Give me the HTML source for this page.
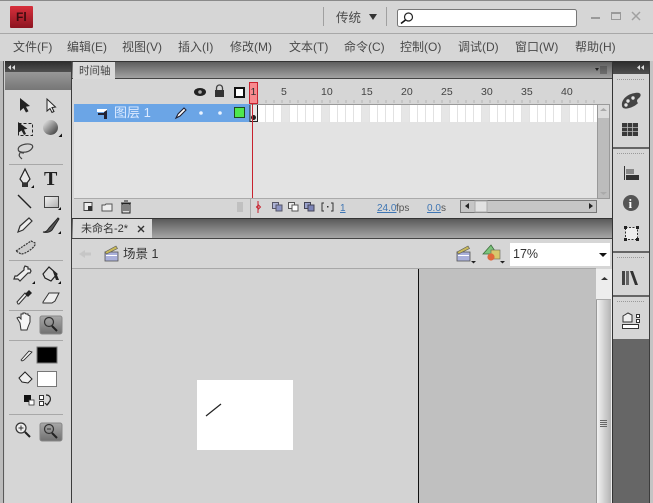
<!DOCTYPE html>
<html><head><meta charset="utf-8"><style>
html,body{margin:0;padding:0;background:#d6d6d6;overflow:hidden}
svg{display:block;position:absolute;left:0;top:0}
text{font-family:"Liberation Sans","Noto Sans CJK SC",sans-serif;fill:#444}
.m{font-size:12px;fill:#4a4a4a}
.n{font-size:10.5px;fill:#444}
</style></head><body>
<svg width="653" height="503" viewBox="0 0 653 503" xmlns="http://www.w3.org/2000/svg">
<defs>
<linearGradient id="hd" x1="0" y1="0" x2="0" y2="1"><stop offset="0" stop-color="#5a5a5a"/><stop offset="1" stop-color="#a6a6a6"/></linearGradient>
<linearGradient id="band" x1="0" y1="0" x2="0" y2="1"><stop offset="0" stop-color="#989898"/><stop offset="1" stop-color="#767676"/></linearGradient>
<linearGradient id="red" x1="0" y1="0" x2="0" y2="1"><stop offset="0" stop-color="#d8303c"/><stop offset="1" stop-color="#8c1420"/></linearGradient>
<linearGradient id="sel" x1="0" y1="0" x2="0" y2="1"><stop offset="0" stop-color="#a8a8a8"/><stop offset="1" stop-color="#707070"/></linearGradient>
<linearGradient id="sb" x1="0" y1="0" x2="1" y2="0"><stop offset="0" stop-color="#f6f6f6"/><stop offset="1" stop-color="#b4b4b4"/></linearGradient>
<linearGradient id="ball" x1="0" y1="0" x2="1" y2="1"><stop offset="0" stop-color="#f0f0f0"/><stop offset="1" stop-color="#2e2e2e"/></linearGradient>
<linearGradient id="dk" x1="0" y1="0" x2="0" y2="1"><stop offset="0" stop-color="#2c2c2c"/><stop offset="1" stop-color="#505050"/></linearGradient>
<linearGradient id="rc" x1="0" y1="0" x2="1" y2="1"><stop offset="0" stop-color="#f4f4f4"/><stop offset="1" stop-color="#b0b0b0"/></linearGradient>
</defs>

<!-- window -->
<rect width="653" height="503" fill="#d6d6d6"/>
<rect x="0" y="0" width="653" height="1" fill="#8a8a8a"/>
<rect x="0" y="33" width="653" height="1" fill="#a8a8a8"/>

<!-- logo -->
<rect x="10" y="6" width="23" height="22" rx="1" fill="url(#red)"/>
<text x="16" y="21" style="font-size:12px;font-weight:bold;fill:#3a0a0e">Fl</text>

<!-- title -->
<rect x="323" y="7" width="1" height="19" fill="#a0a0a0"/>
<text x="336" y="22" class="m" style="font-size:12.5px">传统</text>
<path d="M369 14h8l-4 6z" fill="#333"/>
<rect x="386" y="7" width="1" height="19" fill="#a0a0a0"/>
<rect x="397.500" y="9.500" width="179" height="17" rx="2" fill="#fff" stroke="#777"/>
<circle cx="408.500" cy="17" r="4" fill="none" stroke="#222" stroke-width="1.200"/>
<path d="M405.500 20l-4.500 3.500" stroke="#111" stroke-width="1.600"/>
<rect x="591" y="17" width="9" height="2" fill="#999"/>
<rect x="611.500" y="12.500" width="9" height="7" fill="none" stroke="#999"/><rect x="611" y="12" width="10" height="2" fill="#999"/>
<path d="M632 12l8 8M640 12l-8 8" stroke="#a0a0a0" stroke-width="1.500"/>

<!-- menu -->
<text x="13" y="51" class="m">文件(F)</text>
<text x="67" y="51" class="m">编辑(E)</text>
<text x="122" y="51" class="m">视图(V)</text>
<text x="178" y="51" class="m">插入(I)</text>
<text x="230" y="51" class="m">修改(M)</text>
<text x="289" y="51" class="m">文本(T)</text>
<text x="344" y="51" class="m">命令(C)</text>
<text x="400" y="51" class="m">控制(O)</text>
<text x="458" y="51" class="m">调试(D)</text>
<text x="515" y="51" class="m">窗口(W)</text>
<text x="575" y="51" class="m">帮助(H)</text>

<!-- left dock -->
<rect x="0" y="61" width="3" height="442" fill="#bcbcbc"/>
<rect x="3" y="61" width="1" height="442" fill="#5a5a5a"/>
<rect x="4" y="61" width="1" height="442" fill="#cfcfcf"/>
<rect x="5" y="61" width="67" height="11" fill="url(#dk)"/>
<path d="M11 65l-3 2.500 3 2.500zM15 65l-3 2.500 3 2.500z" fill="#ddd"/>
<rect x="5" y="72" width="66" height="18" fill="url(#band)"/>
<rect x="71" y="61" width="1" height="442" fill="#3c3c3c"/>

<!-- tool separators -->
<g fill="#a8a8a8"><rect x="9" y="164" width="54" height="1"/><rect x="9" y="260" width="54" height="1"/><rect x="9" y="310" width="54" height="1"/><rect x="9" y="340" width="54" height="1"/><rect x="9" y="414" width="54" height="1"/></g>

<!-- tools -->
<path d="M20 98l0 13 3.500-3 2.500 4.500 2.500-1.300-2.500-4.500 4-.7z" fill="#222"/>
<path d="M47 99l0 12 3-2.500 2 4 2-1-2-4 3.500-.5z" fill="#eee" stroke="#222"/>
<rect x="18.500" y="123.500" width="14" height="12" fill="none" stroke="#222" stroke-dasharray="3 2"/>
<path d="M18 122l0 11 3.500-2.500 2.500 4.500 2-1-2-4.500 3.500-.7z" fill="#222"/>
<circle cx="50.500" cy="127.500" r="7.500" fill="url(#ball)"/><path d="M62 137h-3.500l3.500-3.500z" fill="#111"/>
<path d="M24 153c-5 0-7-3-5-6 3-3 10-4 13-2 2 2-1 6-6 7-3 .5-6 0-7-1M20 153c-2 3 0 4 2 6" fill="none" stroke="#444" stroke-width="1.200"/>
<path d="M25 169l-5 10 3 4h4l3-4z" fill="#e8e8e8" stroke="#222" stroke-width="1.200"/><rect x="22" y="183" width="6" height="4" fill="#333"/><path d="M34 188h-3l3-3z" fill="#111"/>
<text x="44" y="185" style="font-family:'Liberation Serif',serif;font-size:20px;font-weight:bold;fill:#222">T</text>
<path d="M18 195l13 13" stroke="#222" stroke-width="1.400"/>
<rect x="44.500" y="196.500" width="14" height="11" fill="url(#rc)" stroke="#444"/><path d="M61 210h-3l3-3z" fill="#111"/>
<path d="M18 232l2-6 9-8 3 3-9 9z" fill="#eee" stroke="#333" stroke-width="1.200"/>
<path d="M43 232c3 0 4-1 6-4l9-10 1 1-7 11c-2 2-5 3-9 2z" fill="#555" stroke="#222"/><path d="M61 234h-3l3-3z" fill="#111"/>
<path d="M16 251l15-10 4 2c2 3-9 11-14 11z" fill="#ccc" stroke="#333" stroke-dasharray="2 1" stroke-width="1.200"/>
<path d="M18 279l2 2 2-2 6-6 2 0 1-2-1-2-2 0 0-2-3-1-1 2 0 2-7 6-2 0-1 3z" fill="#eee" stroke="#333" stroke-width="1.200"/><path d="M35 284h-3l3-3z" fill="#111"/>
<path d="M43 274l6-7 8 7-6 7-6-3z" fill="#ddd" stroke="#222" stroke-width="1.200"/><path d="M52 269l5 6 2 5-3 0z" fill="#222"/><path d="M61 284h-3l3-3z" fill="#111"/>
<path d="M18 304l1 0 8-9-2-2-8 9z" fill="#eee" stroke="#333"/><path d="M25 294l4-4 3 3-4 4z" fill="#222"/>
<path d="M43 302l6-9h10l-4 8-3 2h-9z" fill="#eee" stroke="#333"/>
<path d="M20 323l-3-5 2-1 2 2 0-5h2l0-1 2 0 1 1 2 0 0 1 2 1 0 6-2 5-1 3h-6z" fill="#f6f6f6" stroke="#333"/>
<rect x="40" y="316" width="22" height="18" rx="2" fill="url(#sel)" stroke="#888"/>
<circle cx="49" cy="322" r="4.500" fill="none" stroke="#333" stroke-width="1.200"/><path d="M52 326l5 5" stroke="#222" stroke-width="2"/>

<path d="M21 360l8-9 3 1-8 8-2 1z" fill="#eee" stroke="#222" stroke-width=".8"/>
<rect x="37" y="347" width="20" height="16" fill="#000" stroke="#777"/>
<path d="M19 378l6-6 7 7-4 4-6-1z" fill="#eee" stroke="#222"/>
<rect x="37.500" y="371.500" width="19" height="15" fill="#fff" stroke="#777"/>
<rect x="24" y="395" width="7" height="7" fill="#111"/><rect x="29" y="400" width="5" height="5" fill="#fff" stroke="#333" stroke-width=".8"/>
<rect x="39.500" y="395.500" width="4" height="4" fill="#fff" stroke="#333"/><rect x="39.500" y="401.500" width="4" height="4" fill="#fff" stroke="#333"/><path d="M46 395c4 0 5 3 4 6l-3 4M45 403l2 2 2-2" fill="none" stroke="#222" stroke-width="1.200"/>

<circle cx="21" cy="428" r="5" fill="#eee" stroke="#333" stroke-width="1.200"/><path d="M18.500 428h5M21 425.500v5" stroke="#333"/><path d="M25 432l5 5" stroke="#222" stroke-width="2"/>
<rect x="40" y="423" width="22" height="18" rx="2" fill="url(#sel)" stroke="#888"/>
<circle cx="49" cy="429" r="4.500" fill="none" stroke="#333" stroke-width="1.200"/><path d="M47 429h4" stroke="#333"/><path d="M52 433l5 5" stroke="#222" stroke-width="2"/>

<!-- timeline header -->
<rect x="72" y="61" width="540" height="18" fill="url(#hd)"/>
<rect x="72" y="61" width="540" height="1" fill="#333"/>
<rect x="72" y="78" width="540" height="1" fill="#444"/>
<rect x="73" y="62" width="42" height="17" fill="#dadada"/>
<text x="79" y="74" style="font-size:10.500px;fill:#444">时间轴</text>
<path d="M595 68h4l-2 3z" fill="#222"/><path d="M600 67h7M600 69h7M600 71h7M600 73h7" stroke="#333" stroke-width=".8"/>

<!-- timeline body -->
<rect x="72" y="79" width="540" height="139" fill="#d6d6d6"/>
<rect x="74" y="122" width="176" height="76" fill="#e3e3e3"/>
<rect x="74" y="104" width="176" height="18" fill="#6ba5e6"/>
<rect x="74" y="198" width="523" height="1" fill="#aaa"/>
<rect x="250" y="122" width="347" height="76" fill="#e3e3e3"/>

<!-- eye lock outline -->
<ellipse cx="200" cy="92" rx="6" ry="4" fill="#222"/><circle cx="200" cy="92" r="1.800" fill="#aaa"/>
<rect x="215" y="90" width="9" height="7" fill="#333"/><path d="M216.500 90v-2a3 3 0 0 1 6 0v2" fill="none" stroke="#444" stroke-width="1.300"/>
<rect x="235" y="88" width="9" height="9" fill="#fff" stroke="#111" stroke-width="2"/>

<!-- layer row -->
<path d="M97 109h10v9h-3v-6h-7z" fill="#fff"/><path d="M104 112v7h3v-9" fill="#223"/><path d="M98 113h6v2h-6z" fill="#223"/>
<text x="114" y="117" style="font-size:13px;fill:#dceaff">图层 1</text>
<path d="M176 118l2-4 6-6 2 2-6 6z" fill="#fff" stroke="#223" stroke-width="1.100"/>
<circle cx="201" cy="113" r="1.800" fill="#eaf3ff"/><circle cx="220" cy="113" r="1.800" fill="#eaf3ff"/>
<rect x="234.500" y="107.500" width="10" height="10" fill="#4ee84e" stroke="#1d4a1d"/>

<!-- frames -->
<rect x="258" y="105" width="339" height="17" fill="#fff"/>
<g fill="#e6e6e6"><rect x="282" y="105" width="8" height="17"/><rect x="322" y="105" width="8" height="17"/><rect x="362" y="105" width="8" height="17"/><rect x="402" y="105" width="8" height="17"/><rect x="442" y="105" width="8" height="17"/><rect x="482" y="105" width="8" height="17"/><rect x="522" y="105" width="8" height="17"/><rect x="562" y="105" width="8" height="17"/></g>
<g stroke="#e2e2e2" stroke-width="1">
<path d="M265.500 105v17M273.500 105v17M281.500 105v17M289.500 105v17M297.500 105v17M305.500 105v17M313.500 105v17M321.500 105v17M329.500 105v17M337.500 105v17M345.500 105v17M353.500 105v17M361.500 105v17M369.500 105v17M377.500 105v17M385.500 105v17M393.500 105v17M401.500 105v17M409.500 105v17M417.500 105v17M425.500 105v17M433.500 105v17M441.500 105v17M449.500 105v17M457.500 105v17M465.500 105v17M473.500 105v17M481.500 105v17M489.500 105v17M497.500 105v17M505.500 105v17M513.500 105v17M521.500 105v17M529.500 105v17M537.500 105v17M545.500 105v17M553.500 105v17M561.500 105v17M569.500 105v17M577.500 105v17M585.500 105v17M593.500 105v17"/>
</g>
<rect x="250" y="104" width="347" height="1" fill="#999"/>
<path d="M258 100v3M266 100v3M274 100v3M282 100v3M290 100v3M298 100v3M306 100v3M314 100v3M322 100v3M330 100v3M338 100v3M346 100v3M354 100v3M362 100v3M370 100v3M378 100v3M386 100v3M394 100v3M402 100v3M410 100v3M418 100v3M426 100v3M434 100v3M442 100v3M450 100v3M458 100v3M466 100v3M474 100v3M482 100v3M490 100v3M498 100v3M506 100v3M514 100v3M522 100v3M530 100v3M538 100v3M546 100v3M554 100v3M562 100v3M570 100v3M578 100v3M586 100v3M594 100v3" stroke="#b4b4b4"/>
<rect x="250" y="105" width="8" height="17" fill="#e8e8e8"/><path d="M250 105v17M257.500 105v17M250 121.500h8" stroke="#222" fill="none"/>
<circle cx="253.500" cy="117.500" r="2.500" fill="#222"/>

<!-- ruler numbers -->
<text x="281" y="95" class="n">5</text><text x="321" y="95" class="n">10</text><text x="361" y="95" class="n">15</text><text x="401" y="95" class="n">20</text><text x="441" y="95" class="n">25</text><text x="481" y="95" class="n">30</text><text x="521" y="95" class="n">35</text><text x="561" y="95" class="n">40</text>

<!-- playhead -->
<rect x="252" y="104" width="1" height="94" fill="#c8222e"/>
<rect x="249.500" y="82.500" width="8" height="21" fill="#f88a8e" stroke="#c8222e"/>
<text x="250.500" y="95" class="n" style="fill:#333">1</text>

<!-- timeline scrollbar -->
<rect x="597.500" y="104.500" width="12" height="94" fill="#bcbcbc" stroke="#999"/>
<rect x="598" y="105" width="11" height="13" fill="#dcdcdc"/>
<path d="M600 111l3.500-3 3.500 3z" fill="#aaa"/>
<path d="M600 192l3.500 3 3.500-3z" fill="#aaa"/>

<!-- timeline bottom bar -->
<rect x="250" y="199" width="1" height="19" fill="#aaa"/>
<path d="M84 202.500h8v8h-8z" fill="#eee" stroke="#444"/><path d="M88 206h4v5h-4z" fill="#333"/>
<path d="M102 205h3l1-1h6v7h-10z" fill="#eee" stroke="#555"/>
<rect x="122" y="204" width="8" height="9" fill="#ddd" stroke="#222"/><path d="M121 203h10M124 201h4M124 205v6M126 205v6M128 205v6" stroke="#222"/>
<path d="M238 202v10M240 202v10M242 202v10" stroke="#aaa"/>
<path d="M258 201v12" stroke="#c8222e"/><path d="M256.500 207l2-2 2 2-2 2z" fill="none" stroke="#c8222e"/>
<rect x="272.500" y="202.500" width="6" height="6" fill="#aeb4d6" stroke="#556"/><rect x="276" y="205" width="6" height="6" fill="#8c94c4" stroke="#556"/>
<rect x="288.500" y="202.500" width="6" height="6" fill="#eee" stroke="#555"/><rect x="292" y="205" width="6" height="6" fill="#fff" stroke="#555"/>
<rect x="304.500" y="202.500" width="6" height="6" fill="#9aa2cc" stroke="#445"/><rect x="308" y="205" width="6" height="6" fill="#7c84b8" stroke="#445"/>
<path d="M324 203h-2v8h2M331 203h2v8h-2" fill="none" stroke="#333"/><rect x="327" y="206" width="1.500" height="1.500" fill="#333"/>
<text x="340" y="211" style="font-size:10px;fill:#3f76b4" text-decoration="underline">1</text>
<text x="377" y="211" style="font-size:10px;fill:#3f76b4" text-decoration="underline">24.0</text><text x="396" y="211" style="font-size:10px;fill:#555">fps</text>
<text x="427" y="211" style="font-size:10px;fill:#3f76b4" text-decoration="underline">0.0</text><text x="441" y="211" style="font-size:10px;fill:#555">s</text>
<rect x="460.500" y="200.500" width="136" height="12" fill="#c6c6c6" stroke="#777"/>
<path d="M469 203v6l-4-3z" fill="#222"/><path d="M589 203v6l4-3z" fill="#222"/>
<rect x="475" y="201" width="12" height="11" fill="#e2e2e2" stroke="#aaa"/>

<!-- document tab bar -->
<rect x="72" y="218" width="540" height="1" fill="#333"/>
<rect x="72" y="219" width="540" height="19" fill="url(#hd)"/>
<rect x="72" y="238" width="540" height="1" fill="#444"/>
<rect x="73" y="219" width="79" height="19" fill="#dadada"/>
<text x="81" y="232" style="font-size:11px;fill:#333">未命名-2*</text>
<path d="M138 226l6 6M144 226l-6 6" stroke="#333" stroke-width="1.400"/>

<!-- edit bar -->
<rect x="72" y="239" width="540" height="29" fill="#d6d6d6"/>
<rect x="72" y="268" width="524" height="1" fill="#a8a8a8"/>
<path d="M79 254l6-4v2.500h6v3h-6V258z" fill="#c6c6c6"/>
<rect x="105" y="252" width="13" height="9" fill="#aab0da" stroke="#555" stroke-width=".8"/>
<path d="M105 252l11-6 1.500 2.500-11 5.500z" fill="#c8b85a" stroke="#555" stroke-width=".6"/><rect x="106" y="255" width="11" height="1" fill="#fff"/>
<text x="123" y="258" style="font-size:12.500px;fill:#333">场景 1</text>
<rect x="457" y="252" width="13" height="9" fill="#aab0da" stroke="#555" stroke-width=".8"/>
<path d="M457 252l11-6 1.500 2.500-11 5.500z" fill="#c8b85a" stroke="#555" stroke-width=".6"/><rect x="458" y="255" width="11" height="1" fill="#fff"/>
<path d="M471 261h5l-2.500 2.500z" fill="#222"/>
<path d="M483 254l8-9 6 9z" fill="#7cc47c" stroke="#3c6c3c" stroke-width=".8"/><rect x="491" y="250" width="9" height="9" fill="#d8c86c" stroke="#665" stroke-width=".6"/><circle cx="491" cy="257" r="3.600" fill="#e0683c"/>
<path d="M500 261h5l-2.500 2.500z" fill="#222"/>
<rect x="510" y="243" width="100" height="23" fill="#fff"/>
<text x="513" y="258" style="font-size:12.500px;fill:#333">17%</text>
<path d="M599 253h8l-4 4z" fill="#111"/>

<!-- stage -->
<rect x="72" y="269" width="346" height="234" fill="#d3d3d3"/>
<rect x="418" y="269" width="1" height="234" fill="#111"/>
<rect x="419" y="269" width="177" height="234" fill="#c0c0c0"/>
<rect x="197" y="380" width="96" height="70" fill="#fff"/>
<path d="M206 416l15-12" stroke="#222" stroke-width="1.200"/>

<!-- stage scrollbar -->
<rect x="596" y="269" width="16" height="234" fill="#ededed"/>
<path d="M601 280l3.500-3 3.500 3z" fill="#333"/>
<rect x="596" y="299" width="15" height="204" fill="url(#sb)"/>
<rect x="596" y="299" width="1" height="204" fill="#999"/>
<rect x="596" y="299" width="15" height="1" fill="#aaa"/>
<path d="M600 420.500h7M600 422.500h7M600 424.500h7M600 426.500h7" stroke="#666"/>

<!-- right dock -->
<rect x="612" y="61" width="38" height="442" fill="#666"/>
<rect x="650" y="61" width="3" height="442" fill="#c4c4c4"/>
<rect x="649" y="61" width="1" height="442" fill="#3c3c3c"/>
<rect x="612" y="61" width="1" height="442" fill="#333"/>
<rect x="613" y="61" width="36" height="13" fill="url(#dk)"/>
<path d="M640 65l-3 2.500 3 2.500zM644 65l-3 2.500 3 2.500z" fill="#ddd"/>
<rect x="613" y="74" width="36" height="73" fill="#d6d6d6"/>
<rect x="613" y="149" width="36" height="102" fill="#d6d6d6"/>
<rect x="613" y="253" width="36" height="42" fill="#d6d6d6"/>
<rect x="613" y="297" width="36" height="42" fill="#d6d6d6"/>
<path d="M617 79.500h27M617 153.500h27M617 257.500h27M617 301.500h27" stroke="#999" stroke-dasharray="1 1"/>
<!-- color -->
<path d="M622 106c-1-6 5-12 13-13 6-1 7 2 4 5-3 2-2 4-1 5-2 3-15 9-16 3z" fill="#444"/><circle cx="628" cy="101" r="1.700" fill="#e4e4e4"/><circle cx="633" cy="98" r="1.700" fill="#e4e4e4"/><circle cx="626" cy="105" r="1.700" fill="#e4e4e4"/>
<!-- swatches -->
<rect x="622" y="123" width="16" height="13" fill="#3a3a3a"/><path d="M622 127.500h16M622 131.500h16M627.500 123v13M632.500 123v13" stroke="#bbb" stroke-width=".8"/>
<!-- align -->
<rect x="624" y="166" width="1" height="14" fill="#333"/><rect x="626" y="169" width="8" height="5" fill="#888"/><rect x="626" y="175" width="13" height="5" fill="#333"/>
<!-- info -->
<circle cx="631" cy="203" r="8" fill="#555"/><text x="628.500" y="208" style="font-family:'Liberation Serif',serif;font-size:13px;font-weight:bold;fill:#fff">i</text>
<!-- transform -->
<rect x="625.500" y="227.500" width="12" height="12" fill="#eee" stroke="#333" stroke-dasharray="2 1.500"/><g fill="#222"><rect x="624" y="226" width="3" height="3"/><rect x="636" y="226" width="3" height="3"/><rect x="624" y="238" width="3" height="3"/><rect x="636" y="238" width="3" height="3"/></g>
<!-- library -->
<rect x="622" y="271" width="3" height="14" fill="#444"/><rect x="626" y="271" width="3" height="14" fill="#666"/><path d="M630 271h3l5 14h-3z" fill="#333"/>
<!-- components -->
<path d="M623 316l5-3 4 2v7h-9z" fill="#eee" stroke="#333"/><rect x="636.500" y="314.500" width="3" height="3" fill="#fff" stroke="#333"/><rect x="636.500" y="319.500" width="3" height="3" fill="#fff" stroke="#333"/><rect x="622.500" y="324.500" width="16" height="4" fill="#fff" stroke="#333"/>
</svg>
</body></html>
